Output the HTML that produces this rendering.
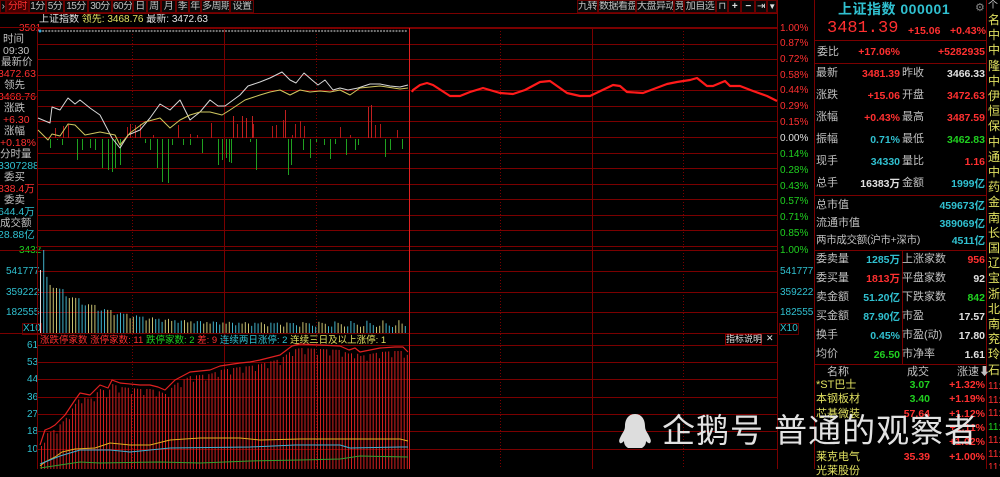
<!DOCTYPE html>
<html><head><meta charset="utf-8">
<style>
*{margin:0;padding:0;box-sizing:border-box}
body{width:1000px;height:469px;background:#000;overflow:hidden;position:relative;font-family:"Liberation Sans","Noto Sans CJK SC",sans-serif;font-size:11px;color:#c0c0c0}
.a{position:absolute;white-space:nowrap;line-height:1}
.tab{position:absolute;top:0;height:13px;border:1px solid #600;font-size:10px;line-height:11px;text-align:center;color:#c0c0c0;background:#080808;white-space:nowrap;overflow:hidden;letter-spacing:-0.5px}
.r{color:#ff3030}.g{color:#20d020}.c{color:#30c0d0}.y{color:#e0e060}.w{color:#e0e0e0}
.lp{position:absolute;left:0;top:28px;width:37px;height:225px;overflow:hidden}
.lab{position:absolute;left:1px;font-size:10.5px;line-height:1;white-space:nowrap}
.pct{position:absolute;left:780px;font-size:10px;line-height:1}
.rp{position:absolute;font-size:11px;line-height:1;white-space:nowrap}
.rv{position:absolute;font-size:10.5px;line-height:1;text-align:right;font-weight:bold;white-space:nowrap}
</style></head><body>
<!-- toolbar -->
<div class="tab" style="left:0;width:6px">›</div>
<div class="tab r" style="left:6px;width:23px;background:#400">分时</div>
<div class="tab" style="left:29px;width:17px">1分</div>
<div class="tab" style="left:46px;width:18px">5分</div>
<div class="tab" style="left:64px;width:24px">15分</div>
<div class="tab" style="left:88px;width:24px">30分</div>
<div class="tab" style="left:112px;width:21px">60分</div>
<div class="tab" style="left:133px;width:14px">日</div>
<div class="tab" style="left:147px;width:14px">周</div>
<div class="tab" style="left:161px;width:15px">月</div>
<div class="tab" style="left:176px;width:13px">季</div>
<div class="tab" style="left:189px;width:12px">年</div>
<div class="tab" style="left:201px;width:29px">多周期</div>
<div class="tab" style="left:230px;width:24px">设置</div>
<div class="tab" style="left:577px;width:21px">九转</div>
<div class="tab" style="left:598px;width:38px">数据看盘</div>
<div class="tab" style="left:636px;width:38px">大盘异动</div>
<div class="tab" style="left:674px;width:10px">竞</div>
<div class="tab" style="left:684px;width:32px">加自选</div>
<div class="tab" style="left:716px;width:12px">⊓</div>
<div class="tab w" style="left:728px;width:13px;font-weight:bold">+</div>
<div class="tab w" style="left:741px;width:14px;font-weight:bold">−</div>
<div class="tab w" style="left:755px;width:12px">⇥</div>
<div class="tab w" style="left:767px;width:10px;font-size:8px">▼</div>

<div class="a w" style="left:39px;top:15px;font-size:10px">上证指数 <span class="y">领先: 3468.76</span> 最新: 3472.63</div>
<div class="a r" style="left:19px;top:24px;font-size:10px">3501</div>
<div class="a g" style="left:19px;top:246px;font-size:10px">3432</div>

<!-- left panel -->
<div class="lp">
<div class="lab" style="top:6px;left:3px">时间</div>
<div class="lab" style="top:18px;left:3px">09:30</div>
<div class="lab" style="top:29px">最新价</div>
<div class="lab r" style="top:41px;left:-2px">3472.63</div>
<div class="lab" style="top:52px;left:4px">领先</div>
<div class="lab r" style="top:64px;left:-2px">3468.76</div>
<div class="lab" style="top:75px;left:4px">涨跌</div>
<div class="lab r" style="top:87px;left:3px">+6.30</div>
<div class="lab" style="top:98px;left:4px">涨幅</div>
<div class="lab r" style="top:110px;left:0">+0.18%</div>
<div class="lab" style="top:121px;left:0">分时量</div>
<div class="lab c" style="top:133px;left:-2px">3307288</div>
<div class="lab" style="top:144px;left:4px">委买</div>
<div class="lab r" style="top:156px;left:-2px">838.4万</div>
<div class="lab" style="top:167px;left:4px">委卖</div>
<div class="lab c" style="top:179px;left:-2px">644.4万</div>
<div class="lab" style="top:190px;left:0">成交额</div>
<div class="lab c" style="top:202px;left:-2px">28.88亿</div>
</div>
<div class="a c" style="left:6px;top:267px;font-size:10px">541777</div>
<div class="a c" style="left:6px;top:288px;font-size:10px">359222</div>
<div class="a c" style="left:6px;top:308px;font-size:10px">182555</div>
<div class="a c" style="left:22px;top:323px;font-size:10px;border:1px solid #600">X10</div>
<div class="a c" style="left:27px;top:341px;font-size:10px">61</div>
<div class="a c" style="left:27px;top:358px;font-size:10px">53</div>
<div class="a c" style="left:27px;top:375px;font-size:10px">44</div>
<div class="a c" style="left:27px;top:393px;font-size:10px">36</div>
<div class="a c" style="left:27px;top:410px;font-size:10px">27</div>
<div class="a c" style="left:27px;top:427px;font-size:10px">18</div>
<div class="a c" style="left:27px;top:445px;font-size:10px">10</div>

<svg id="sv" width="1000" height="469" style="position:absolute;left:0;top:0" xmlns="http://www.w3.org/2000/svg"></svg>

<!-- pct labels -->
<div class="pct r" style="top:24px">1.00%</div>
<div class="pct r" style="top:39px">0.87%</div>
<div class="pct r" style="top:55px">0.72%</div>
<div class="pct r" style="top:71px">0.58%</div>
<div class="pct r" style="top:86px">0.44%</div>
<div class="pct r" style="top:102px">0.29%</div>
<div class="pct r" style="top:118px">0.15%</div>
<div class="pct w" style="top:134px">0.00%</div>
<div class="pct g" style="top:150px">0.14%</div>
<div class="pct g" style="top:166px">0.28%</div>
<div class="pct g" style="top:182px">0.43%</div>
<div class="pct g" style="top:197px">0.57%</div>
<div class="pct g" style="top:213px">0.71%</div>
<div class="pct g" style="top:229px">0.85%</div>
<div class="pct g" style="top:246px">1.00%</div>
<div class="pct c" style="top:267px">541777</div>
<div class="pct c" style="top:288px">359222</div>
<div class="pct c" style="top:308px">182555</div>
<div class="pct c" style="top:323px;border:1px solid #600;left:779px">X10</div>

<div class="a" style="left:40px;top:336px;font-size:9.5px"><span class="r">涨跌停家数</span> <span class="r">涨停家数: 11</span> <span class="g">跌停家数: 2</span> <span class="r">差: 9</span> <span class="c">连续两日涨停: 2</span> <span class="y">连续三日及以上涨停: 1</span></div>
<div class="a w" style="left:725px;top:334px;width:37px;height:11px;border:1px solid #800;font-size:9px;text-align:center">指标说明</div>
<div class="a w" style="left:766px;top:334px;font-size:9px">✕</div>

<!-- right panel -->
<div class="a c" style="left:838px;top:2px;font-size:14px;font-weight:bold;letter-spacing:0.5px">上证指数 000001</div>
<div class="a" style="left:975px;top:3px;font-size:11px;color:#888">⚙</div>
<div class="a r" style="left:827px;top:20px;font-size:17px;font-family:'Liberation Mono',monospace">3481.39</div>
<div class="a r" style="left:908px;top:26px;font-size:10.5px;font-weight:bold">+15.06</div>
<div class="a r" style="left:950px;top:26px;font-size:10.5px;font-weight:bold">+0.43%</div>
<div class="rp" style="left:817px;top:47px">委比</div>
<div class="rv r" style="left:820px;width:80px;top:47px">+17.06%</div>
<div class="rv r" style="left:900px;width:85px;top:47px">+5282935</div>

<div id="rows"></div>

<!-- watermark -->
<svg width="34" height="36" style="position:absolute;left:618px;top:413px" viewBox="0 0 34 36"><path d="M17 1C10 1 7 7 7 13c0 3-1 5-3 8-2 4-4 7-2 9 1 1 3-1 4-2 0 3 1 5 4 7h14c3-2 4-4 4-7 1 1 3 3 4 2 2-2 0-5-2-9-2-3-3-5-3-8 0-6-3-12-10-12z" fill="#ddd"/></svg>
<div class="a" style="left:662px;top:414px;font-size:33px;color:#e2e2e2;letter-spacing:1px">企鹅号 普通的观察者</div>

<script>
const S=document.getElementById('sv');let h='';
const L=(x1,y1,x2,y2,c,w,d)=>h+=`<line x1="${x1}" y1="${y1}" x2="${x2}" y2="${y2}" stroke="${c}" stroke-width="${w||1}" ${d?'stroke-dasharray="'+d+'"':''}/>`;
const G='#7a0000';
L(0,13.5,777,13.5,G);L(0,27.5,777,27.5,G);
L(37.5,27,37.5,469,G);L(777.5,0,777.5,469,G);
L(814.5,0,814.5,469,G);L(986.5,0,986.5,469,G);
for(let i=0;i<15;i++){let y=28+i*15.57;L(38,Math.round(y)+.5,777,Math.round(y)+.5,G);}
L(0,96.5,37,96.5,G);
[250,271,292,312,333,345].forEach(y=>L(38,y+.5,777,y+.5,G));
L(0,250.5,37,250.5,G);L(0,333.5,37,333.5,G);
[362,379,397,414,431,449].forEach(y=>L(38,y+.5,777,y+.5,G));
[224,592].forEach(x=>L(x+.5,28,x+.5,469,G));
[132,316,500,683].forEach(x=>L(x+.5,28,x+.5,469,G,1,'1 2'));
L(409.5,28,409.5,469,'#e02020');
for(let x=40;x<=408;x+=3.1)h+=`<circle cx="${x}" cy="31" r="1.1" fill="#777"/>`;
h+=`<circle cx="40" cy="31" r="1.5" fill="#3ad"/>`;
const red=[[55,128],[63,126],[68,124],[127,127],[130,124],[135,125],[140,124],[153,135],[178,125],[190,134],[197,135],[211,123],[233,116],[237,124],[242,116],[246,118],[252,116],[253,124],[272,126],[276,125],[283,120],[285,110],[292,135],[295,124],[300,121],[304,126],[340,127],[350,135],[368,107],[371,105],[375,125],[380,124],[397,130]];
red.forEach(p=>L(p[0]+.5,138,p[0]+.5,p[1],p[1]<120?'#c02020':'#b01818'));
const grn=[[50,148],[57,140],[62,145],[77,160],[82,150],[90,148],[95,150],[102,168],[108,170],[112,172],[115,168],[120,165],[145,143],[150,150],[157,168],[162,182],[168,183],[172,145],[183,145],[190,145],[202,153],[218,165],[222,160],[226,158],[229,162],[231,163],[250,142],[256,170],[288,175],[291,165],[303,150],[310,158],[316,142],[324,145],[330,159],[335,144],[346,155],[355,150],[358,145],[385,157],[390,150],[402,149]];
grn.forEach(p=>L(p[0]+.5,139,p[0]+.5,p[1],'#20a020'));
const P=(a,c,w)=>h+=`<polyline fill="none" stroke="${c}" stroke-width="${w||1}" stroke-linejoin="round" points="${a.map(p=>p.join(',')).join(' ')}"/>`;
P([[38,118],[50,123],[52,107],[60,110],[68,98],[75,104],[80,100],[90,108],[100,115],[112,138],[120,148],[128,135],[140,130],[150,118],[160,104],[170,110],[180,100],[190,120],[200,112],[210,100],[218,106],[225,106],[240,95],[248,86],[260,82],[270,78],[282,72],[290,80],[296,83],[304,73],[312,80],[318,85],[325,80],[333,90],[340,88],[348,90],[358,88],[370,84],[380,84],[390,86],[400,87],[408,85]],'#d8d8d8');
P([[38,130],[48,140],[52,134],[60,136],[68,124],[75,125],[85,135],[100,132],[115,135],[120,145],[130,133],[145,122],[160,118],[170,128],[180,120],[190,115],[200,112],[210,112],[222,115],[230,110],[245,100],[260,95],[270,92],[280,90],[290,95],[300,90],[310,92],[320,91],[330,92],[340,90],[350,95],[360,88],[380,86],[400,89],[408,88]],'#d0c860');
P([[412,92],[413,90],[420,85],[427,83],[433,85],[450,96],[460,96],[470,92],[483,88],[500,93],[513,94],[525,90],[540,82],[550,81],[567,93],[580,96],[590,96],[613,85],[620,86],[627,92],[643,93],[667,84],[677,82],[690,80],[697,78],[707,86],[713,86],[725,81],[730,86],[740,86],[753,91],[767,96],[777,101]],'#ff1a1a',2.2);
let i=0;for(let x=40;x<=407;x+=3.2,i++){let v=i==0?270:i==1?250:Math.min(333,333-(8+50*Math.exp(-i/16)+ (i%5==2?3:0)+(Math.sin(i*1.3)*2)));let col=(Math.floor(i/3)%2)?'#c8c070':'#40b0c8';if(i==0)col='#ddd';L(x+.5,333,x+.5,v,col);}
const R=[[40,445],[45,430],[50,428],[55,425],[65,415],[75,400],[80,393],[90,395],[100,385],[108,388],[112,380],[120,383],[140,385],[150,385],[158,387],[165,390],[175,380],[190,372],[210,370],[220,366],[240,363],[250,362],[260,360],[280,355],[292,346],[300,344],[340,346],[349,350],[355,348],[360,352],[380,348],[395,347],[403,347],[408,352]];
function interp(a,x){for(let k=1;k<a.length;k++)if(x<=a[k][0]){let t=(x-a[k-1][0])/(a[k][0]-a[k-1][0]);return a[k-1][1]+t*(a[k][1]-a[k-1][1]);}return a[a.length-1][1];}
i=0;for(let x=41;x<=407;x+=3.1,i++){let y=interp(R,x)+4+(i%4==1?6:0);L(x+.5,469,x+.5,y,'#d02020');}
P(R,'#e02020',1.2);
P([[40,466],[45,462],[55,457],[62,452],[75,449],[95,448],[110,443],[130,445],[150,445],[170,440],[200,438],[240,438],[260,440],[300,439],[340,439],[400,439],[408,441]],'#e0b020');
P([[40,464],[60,456],[80,450],[110,450],[130,452],[170,448],[250,447],[295,445],[340,445],[350,448],[400,447],[408,447]],'#40b0d0');
P([[40,468],[80,462],[100,463],[160,462],[200,463],[250,461],[300,460],[340,459],[360,456],[408,457]],'#30a030');
[40,63,195,250,364].forEach(y=>L(815,y+.5,986,y+.5,G));
L(902.5,250,902.5,364,G);
S.innerHTML=h;

let o='';
const row=(y,l1,v1,c1,l2,v2,c2)=>{o+=`<div class="rp" style="left:816px;top:${y}px">${l1}</div><div class="rv ${c1}" style="left:820px;width:80px;top:${y+1}px">${v1}</div>`;if(l2)o+=`<div class="rp" style="left:902px;top:${y}px">${l2}</div><div class="rv ${c2}" style="left:920px;width:65px;top:${y+1}px">${v2}</div>`;};
row(68,'最新','3481.39','r','昨收','3466.33','w');
row(90,'涨跌','+15.06','r','开盘','3472.63','r');
row(112,'涨幅','+0.43%','r','最高','3487.59','r');
row(134,'振幅','0.71%','c','最低','3462.83','g');
row(156,'现手','34330','c','量比','1.16','r');
row(178,'总手','16383万','w','金额','1999亿','c');
o+=`<div class="rp" style="left:816px;top:200px">总市值</div><div class="rv c" style="left:900px;width:85px;top:201px">459673亿</div>`;
o+=`<div class="rp" style="left:816px;top:218px">流通市值</div><div class="rv c" style="left:900px;width:85px;top:219px">389069亿</div>`;
o+=`<div class="rp" style="left:816px;top:235px;font-size:10.5px;letter-spacing:-0.3px">两市成交额(沪市+深市)</div><div class="rv c" style="left:930px;width:55px;top:236px">4511亿</div>`;
const r2=[['委卖量','1285万','c','上涨家数','956','r'],['委买量','1813万','r','平盘家数','92','w'],['卖金额','51.20亿','c','下跌家数','842','g'],['买金额','87.90亿','c','市盈','17.57','w'],['换手','0.45%','c','市盈(动)','17.80','w'],['均价','26.50','g','市净率','1.61','w']];
r2.forEach((r,k)=>row(254+k*19,...r));
o+=`<div class="rp" style="left:827px;top:367px">名称</div><div class="rp" style="left:907px;top:367px">成交</div><div class="rp" style="left:957px;top:367px">涨速⬇</div>`;
[['*ST巴士','3.07','g','+1.32%'],['本钢板材','3.40','g','+1.19%'],['芯碁微装','57.64','r','+1.12%'],['','','r','+1.11%'],['','','r','+1.02%'],['莱克电气','35.39','r','+1.00%'],['光莱股份','','r','']].forEach((r,k)=>{let y=380+k*14.3;o+=`<div class="rp y" style="left:816px;top:${y}px">${r[0]}</div><div class="rv ${r[2]}" style="left:880px;width:50px;top:${y}px">${r[1]}</div><div class="rv r" style="left:935px;width:50px;top:${y}px">${r[3]}</div>`;});
o+=`<div style="position:absolute;left:987px;top:0;width:13px;height:469px;overflow:hidden">`;
'名中中隆中伊恒保中通中药金南长国辽宝浙北南兖玲石'.split('').forEach((c,k)=>{o+=`<div class="rp y" style="left:1px;top:${14+k*15.2}px;font-size:12px">${c}</div>`;});
o+=`<div class="rp" style="left:1px;top:1px;font-size:10px">个</div>`;
for(let k=0;k<7;k++)o+=`<div class="rp ${k==3?'g':'r'}" style="left:1px;top:${382+k*13.5}px;font-size:10px">11:</div>`;
o+=`</div>`;
document.getElementById('rows').outerHTML=o;
</script>
</body></html>
